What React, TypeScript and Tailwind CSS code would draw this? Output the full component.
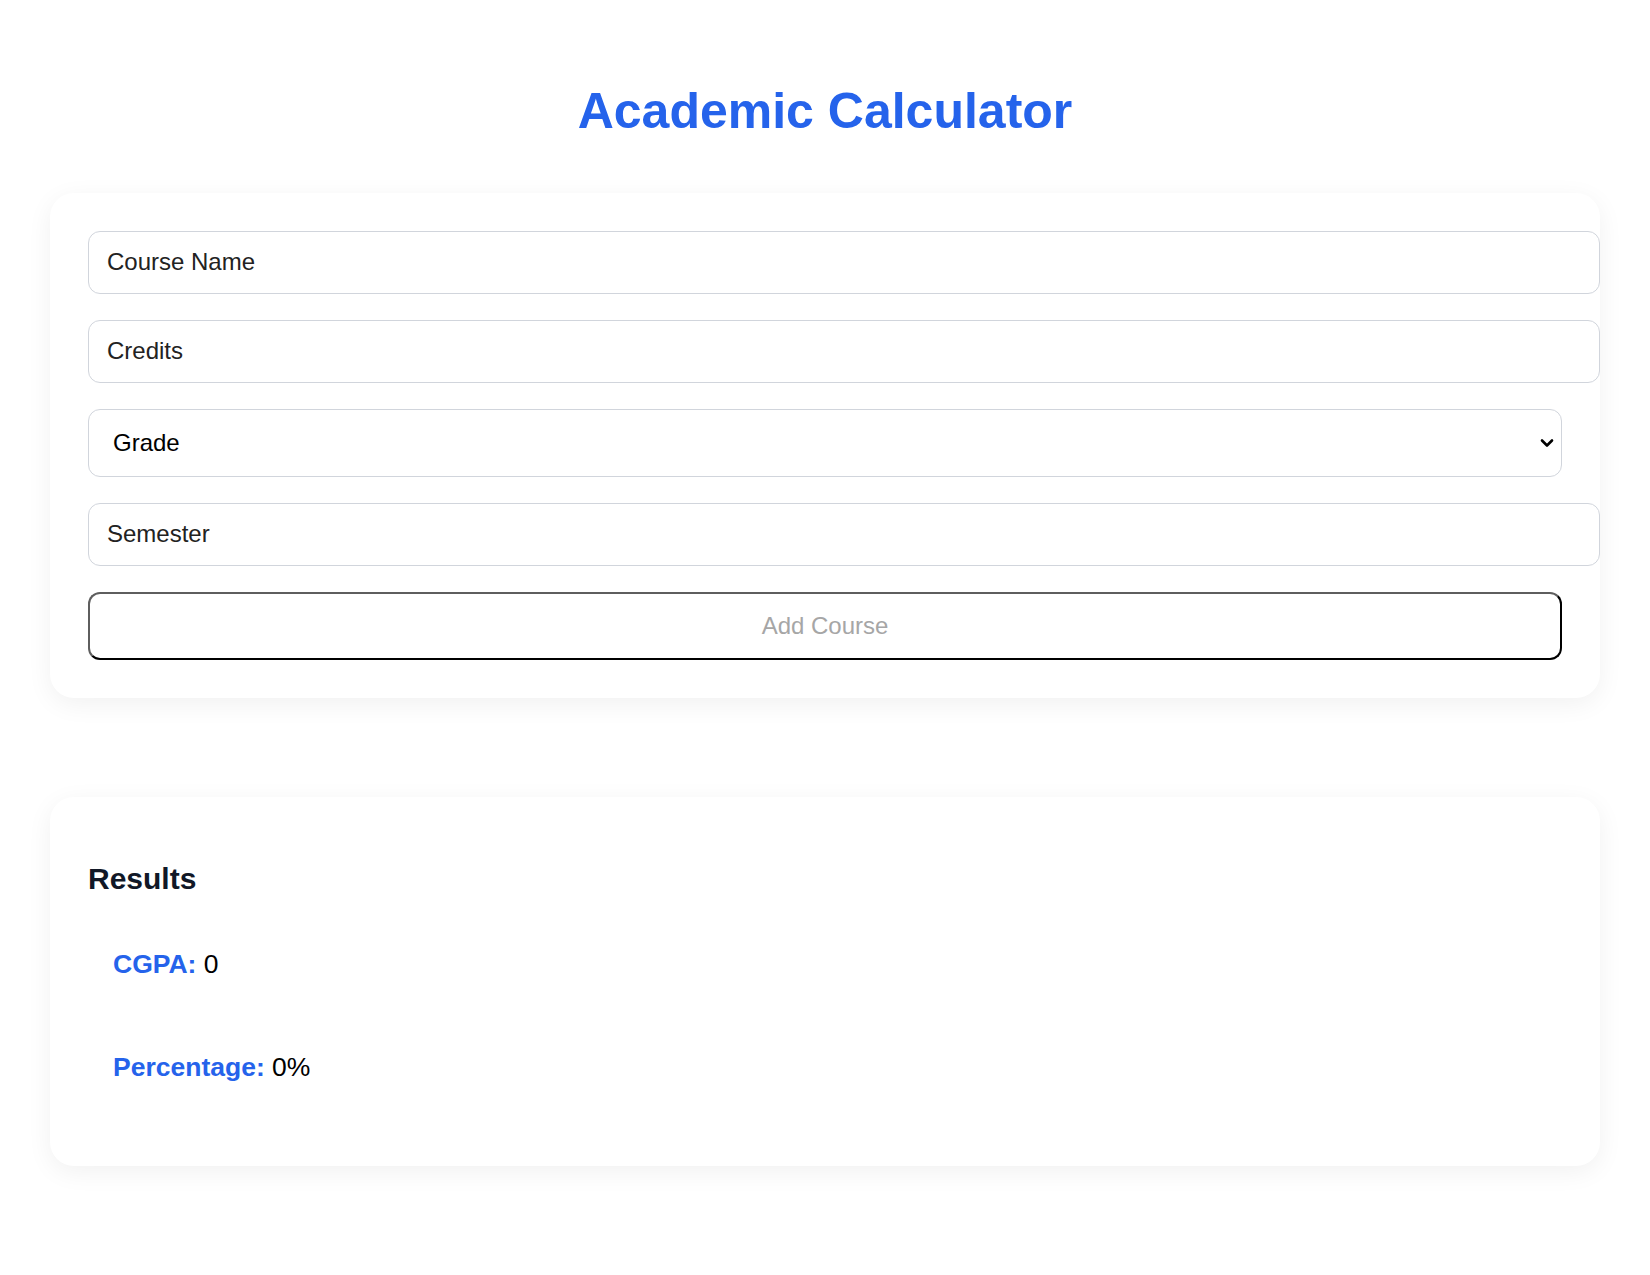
import React from 'react';

const fieldClass =
  'box-content w-full h-[61px] px-[18px] border border-gray-300 rounded-[12px] bg-white text-[24px] text-[#222] placeholder:text-[#222] outline-none';

const ResultRow: React.FC<{ label: string; value: string }> = ({ label, value }) => (
  <div className="p-[24px] pl-[25px] text-[26.5px] leading-[30px]">
    <span className="font-bold text-[#2563eb]">{label}</span> <span className="text-black">{value}</span>
  </div>
);

export default function App() {
  return (
    <div className="min-h-screen bg-white px-[50px] pt-[83px] pb-[100px] font-['Liberation_Sans',Arial,sans-serif]">
      <h1 className="text-center text-[50px] leading-[1.15] font-bold text-[#2563eb]">Academic Calculator</h1>

      <div className="mt-[52px] rounded-[24px] bg-white p-[38px] shadow-[0_6px_26px_rgba(0,0,0,0.06)]">
        <div className="flex flex-col gap-[26px]">
          <input className={fieldClass} placeholder="Course Name" />
          <input className={fieldClass} placeholder="Credits" />
          <div className="relative">
            <select
              defaultValue=""
              className="block w-full h-[68px] appearance-none pl-[24px] pr-[40px] border border-gray-300 rounded-[12px] bg-white text-[24px] text-black outline-none"
            >
              <option value="" disabled>Grade</option>
              <option>A</option>
              <option>B</option>
              <option>C</option>
            </select>
            <svg
              className="pointer-events-none absolute right-[8px] top-1/2 -translate-y-1/2"
              width="14"
              height="10"
              viewBox="0 0 14 10"
              fill="none"
            >
              <path d="M2 2.5 L7 7.5 L12 2.5" stroke="#000" strokeWidth="2.6" strokeLinecap="round" strokeLinejoin="round" />
            </svg>
          </div>
          <input className={fieldClass} placeholder="Semester" />
          <button
            disabled
            className="w-full h-[68px] rounded-[12px] border-[2.5px] border-black border-t-[#5e5e5e] border-l-[#5e5e5e] bg-white text-[24px] text-[#a6a6a6]"
          >
            Add Course
          </button>
        </div>
      </div>

      <div className="mt-[99px] rounded-[24px] bg-white p-[38px] shadow-[0_6px_26px_rgba(0,0,0,0.06)]">
        <h2 className="mt-[27px] text-[30px] leading-[34.5px] font-bold text-[#111827]">Results</h2>
        <div className="mt-[29px] mb-[22px] flex flex-col gap-[25px]">
          <ResultRow label="CGPA:" value="0" />
          <ResultRow label="Percentage:" value="0%" />
        </div>
      </div>
    </div>
  );
}
